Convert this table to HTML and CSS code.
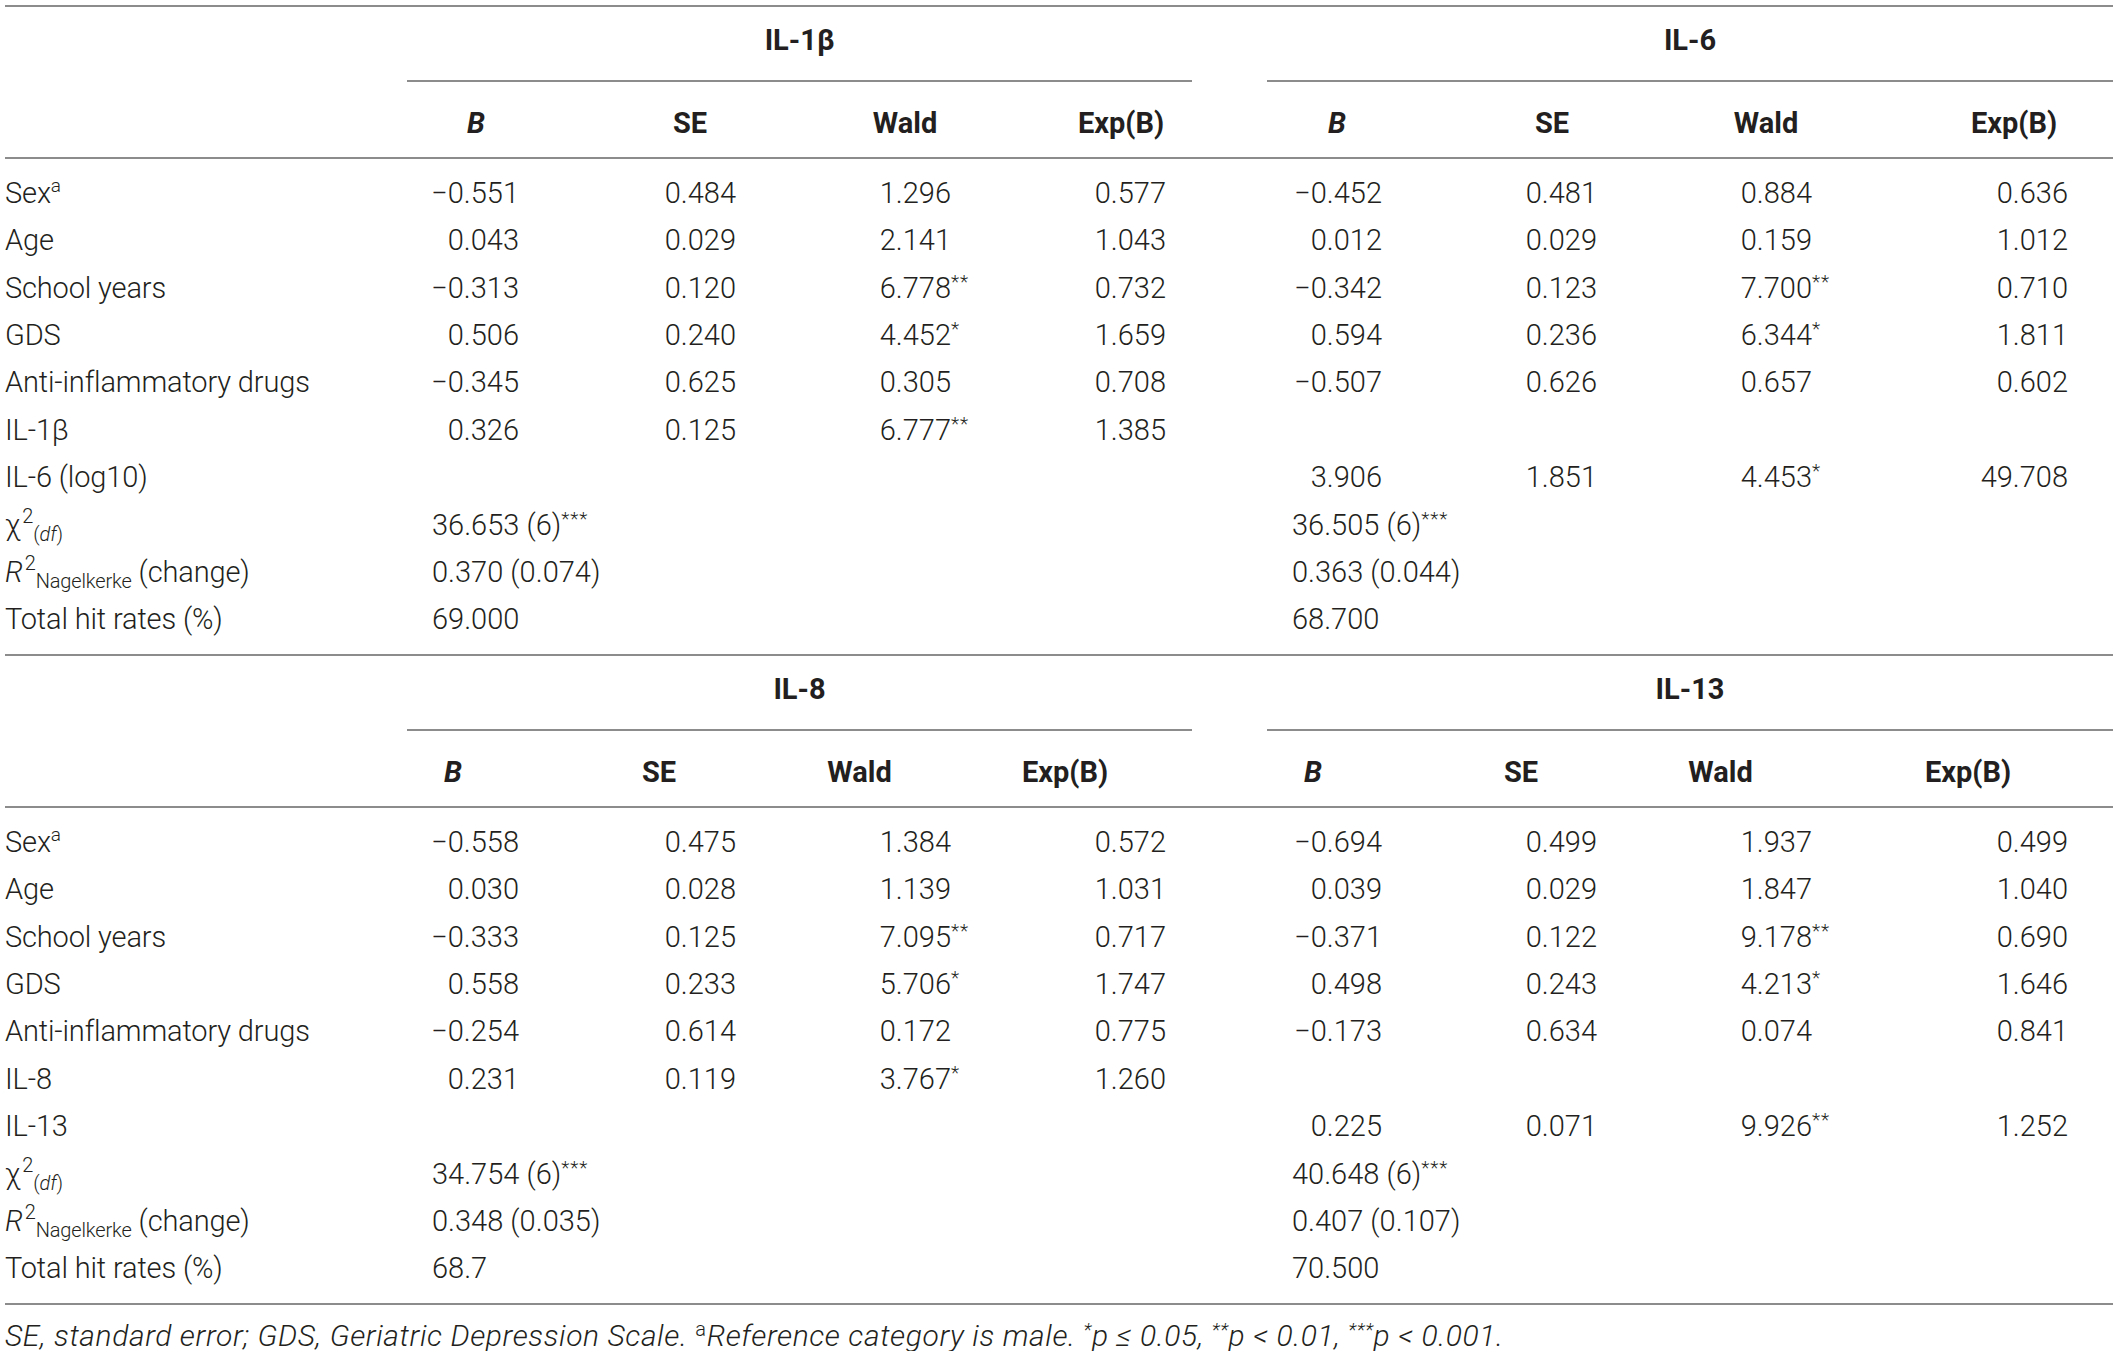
FILE: index.html
```html
<!DOCTYPE html>
<html lang="en">
<head>
<meta charset="utf-8">
<title>Logistic regression table</title>
<link rel="stylesheet" href="styles.css">
</head>
<body>
<div class="tbl">
  <section class="block">
    <div class="grid">
      <div class="gh-blank"></div>
      <div class="gh left">IL-1β</div>
      <div class="gh-blank"></div>
      <div class="gh right">IL-6</div>
    </div>
    <div class="grid ch-row h1">
      <div></div>
      <div class="ch c-b1"><i>B</i></div>
      <div class="ch c-se">SE</div>
      <div class="ch c-w">Wald</div>
      <div class="ch c-x1">Exp(B)</div>
      <div></div>
      <div class="ch c-b2"><i>B</i></div>
      <div class="ch c-se">SE</div>
      <div class="ch c-w">Wald</div>
      <div class="ch c-x2">Exp(B)</div>
    </div>
    <div class="grid body">
      <div class="lb">Sex<sup class="sa">a</sup></div><div class="v">−0.551</div><div class="v">0.484</div><div class="v">1.296</div><div class="v x1">0.577</div><div></div><div class="v">−0.452</div><div class="v">0.481</div><div class="v">0.884</div><div class="v x2">0.636</div>
      <div class="lb">Age</div><div class="v">0.043</div><div class="v">0.029</div><div class="v">2.141</div><div class="v x1">1.043</div><div></div><div class="v">0.012</div><div class="v">0.029</div><div class="v">0.159</div><div class="v x2">1.012</div>
      <div class="lb">School years</div><div class="v">−0.313</div><div class="v">0.120</div><div class="v">6.778<span class="st">**</span></div><div class="v x1">0.732</div><div></div><div class="v">−0.342</div><div class="v">0.123</div><div class="v">7.700<span class="st">**</span></div><div class="v x2">0.710</div>
      <div class="lb">GDS</div><div class="v">0.506</div><div class="v">0.240</div><div class="v">4.452<span class="st">*</span></div><div class="v x1">1.659</div><div></div><div class="v">0.594</div><div class="v">0.236</div><div class="v">6.344<span class="st">*</span></div><div class="v x2">1.811</div>
      <div class="lb">Anti-inflammatory drugs</div><div class="v">−0.345</div><div class="v">0.625</div><div class="v">0.305</div><div class="v x1">0.708</div><div></div><div class="v">−0.507</div><div class="v">0.626</div><div class="v">0.657</div><div class="v x2">0.602</div>
      <div class="lb">IL-1β</div><div class="v">0.326</div><div class="v">0.125</div><div class="v">6.777<span class="st">**</span></div><div class="v x1">1.385</div><div></div><div></div><div></div><div></div><div></div>
      <div class="lb">IL-6 (log10)</div><div></div><div></div><div></div><div></div><div></div><div class="v">3.906</div><div class="v">1.851</div><div class="v">4.453<span class="st">*</span></div><div class="v x2">49.708</div>
      <div class="lb">χ<sup class="s2">2</sup><sub class="sb">(<i>df</i>)</sub></div><div class="sum">36.653 (6)<sup class="s3">***</sup></div><div></div><div class="sum">36.505 (6)<sup class="s3">***</sup></div>
      <div class="lb"><i>R</i><sup class="s2">2</sup><sub class="sb">Nagelkerke</sub> (change)</div><div class="sum">0.370 (0.074)</div><div></div><div class="sum">0.363 (0.044)</div>
      <div class="lb">Total hit rates (%)</div><div class="sum">69.000</div><div></div><div class="sum">68.700</div>
    </div>
  </section>
  <section class="block">
    <div class="grid">
      <div class="gh-blank"></div>
      <div class="gh left">IL-8</div>
      <div class="gh-blank"></div>
      <div class="gh right">IL-13</div>
    </div>
    <div class="grid ch-row h2">
      <div></div>
      <div class="ch c-b1"><i>B</i></div>
      <div class="ch c-se">SE</div>
      <div class="ch c-w">Wald</div>
      <div class="ch c-x1">Exp(B)</div>
      <div></div>
      <div class="ch c-b2"><i>B</i></div>
      <div class="ch c-se">SE</div>
      <div class="ch c-w">Wald</div>
      <div class="ch c-x2">Exp(B)</div>
    </div>
    <div class="grid body">
      <div class="lb">Sex<sup class="sa">a</sup></div><div class="v">−0.558</div><div class="v">0.475</div><div class="v">1.384</div><div class="v x1">0.572</div><div></div><div class="v">−0.694</div><div class="v">0.499</div><div class="v">1.937</div><div class="v x2">0.499</div>
      <div class="lb">Age</div><div class="v">0.030</div><div class="v">0.028</div><div class="v">1.139</div><div class="v x1">1.031</div><div></div><div class="v">0.039</div><div class="v">0.029</div><div class="v">1.847</div><div class="v x2">1.040</div>
      <div class="lb">School years</div><div class="v">−0.333</div><div class="v">0.125</div><div class="v">7.095<span class="st">**</span></div><div class="v x1">0.717</div><div></div><div class="v">−0.371</div><div class="v">0.122</div><div class="v">9.178<span class="st">**</span></div><div class="v x2">0.690</div>
      <div class="lb">GDS</div><div class="v">0.558</div><div class="v">0.233</div><div class="v">5.706<span class="st">*</span></div><div class="v x1">1.747</div><div></div><div class="v">0.498</div><div class="v">0.243</div><div class="v">4.213<span class="st">*</span></div><div class="v x2">1.646</div>
      <div class="lb">Anti-inflammatory drugs</div><div class="v">−0.254</div><div class="v">0.614</div><div class="v">0.172</div><div class="v x1">0.775</div><div></div><div class="v">−0.173</div><div class="v">0.634</div><div class="v">0.074</div><div class="v x2">0.841</div>
      <div class="lb">IL-8</div><div class="v">0.231</div><div class="v">0.119</div><div class="v">3.767<span class="st">*</span></div><div class="v x1">1.260</div><div></div><div></div><div></div><div></div><div></div>
      <div class="lb">IL-13</div><div></div><div></div><div></div><div></div><div></div><div class="v">0.225</div><div class="v">0.071</div><div class="v">9.926<span class="st">**</span></div><div class="v x2">1.252</div>
      <div class="lb">χ<sup class="s2">2</sup><sub class="sb">(<i>df</i>)</sub></div><div class="sum">34.754 (6)<sup class="s3">***</sup></div><div></div><div class="sum">40.648 (6)<sup class="s3">***</sup></div>
      <div class="lb"><i>R</i><sup class="s2">2</sup><sub class="sb">Nagelkerke</sub> (change)</div><div class="sum">0.348 (0.035)</div><div></div><div class="sum">0.407 (0.107)</div>
      <div class="lb">Total hit rates (%)</div><div class="sum">68.7</div><div></div><div class="sum">70.500</div>
    </div>
  </section>
  <p class="foot">SE, standard error; GDS, Geriatric Depression Scale. <sup class="fa">a</sup>Reference category is male. <sup class="fs">*</sup>p ≤ 0.05, <sup class="fs">**</sup>p &lt; 0.01, <sup class="fs">***</sup>p &lt; 0.001.</p>
</div>
</body>
</html>
```
FILE: styles.css
```css
html, body {
  margin: 0;
  padding: 0;
  background: #ffffff;
}

body {
  font-family: Roboto, "Liberation Sans", Arial, sans-serif;
  font-weight: 300;
  font-size: 29px;
  color: #231f20;
}

.tbl {
  margin: 5px 0 0 5px;
  width: 2108px;
  border-top: 2px solid #8c8c8c;
}

.block {
  border-bottom: 2px solid #8c8c8c;
}

.grid {
  display: grid;
  grid-template-columns: 402px 112px 217px 215px 241px 75px 115px 215px 215px 301px;
  line-height: 47.4px;
}

.gh {
  grid-column: span 4;
  text-align: center;
  font-weight: 700;
  padding: 10px 0 16px;
  border-bottom: 2px solid #8c8c8c;
}

.ch-row {
  border-bottom: 2px solid #8c8c8c;
}

.ch {
  font-weight: 700;
  text-align: center;
  padding: 18px 0 9px;
}

.ch i {
  font-style: italic;
}

/* header placements, block 1 */
.h1 .c-b1 { padding-left: 26px; }
.h1 .c-b2 { padding-left: 25px; }
.h1 .c-se { padding-left: 125px; }
.h1 .c-w { padding-left: 123px; }
.h1 .c-x1 { padding-left: 99px; }
.h1 .c-x2 { padding-left: 103px; }

/* header placements, block 2 */
.h2 .c-b1 { padding-right: 20px; }
.h2 .c-b2 { padding-right: 23px; }
.h2 .c-se { padding-left: 63px; }
.h2 .c-w { padding-left: 32px; }
.h2 .c-x1 { padding-right: 13px; }
.h2 .c-x2 { padding-left: 11px; }

.body {
  padding: 11px 0 10px;
}

.lb {
  white-space: nowrap;
  letter-spacing: -0.15px;
}

.v {
  text-align: right;
  white-space: nowrap;
}

.v.x1 { padding-right: 26px; }
.v.x2 { padding-right: 45px; }

.st {
  display: inline-block;
  width: 0;
  text-align: left;
  font-size: 19px;
  line-height: 1;
  vertical-align: 10px;
  letter-spacing: 1px;
}

.sum {
  grid-column: span 4;
  padding-left: 25px;
  white-space: nowrap;
}

.s3 {
  font-size: 19px;
  line-height: 1;
  vertical-align: 10px;
  letter-spacing: 1px;
}

.sa {
  font-size: 19px;
  line-height: 1;
  vertical-align: 11px;
}

.s2 {
  font-size: 20px;
  line-height: 1;
  vertical-align: 12px;
  margin-left: 2px;
}

.sb {
  font-size: 20px;
  line-height: 1;
  vertical-align: -6px;
}

.lb i {
  font-style: italic;
}

.foot {
  margin: 0;
  padding-top: 14px;
  line-height: 30px;
  font-size: 30px;
  letter-spacing: 0.6px;
  font-style: italic;
  white-space: nowrap;
}

.fa {
  font-size: 20px;
  line-height: 1;
  vertical-align: 10px;
  font-style: normal;
}

.fs {
  font-size: 19px;
  line-height: 1;
  vertical-align: 10px;
}
```
